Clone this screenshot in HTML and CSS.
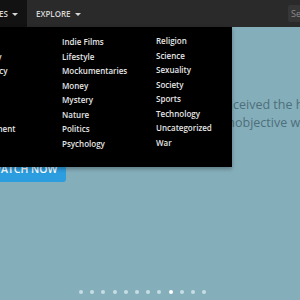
FILE: index.html
```html
<!doctype html>
<html>
<head>
<meta charset="utf-8">
<link rel="stylesheet" href="styles.css">
<title>Explore</title>
</head>
<body>
<header class="navbar">
	<ul class="nav">
		<li class="nav-item active">CATEGORIES <span class="caret"></span></li>
		<li class="nav-item">EXPLORE <span class="caret"></span></li>
	</ul>
	<div class="search">Search</div>
</header>

<div class="dropdown">
	<ul class="col col-first">
		<li>Art</li>
		<li>Astronomy</li>
		<li>Bureaucracy</li>
		<li>Crime</li>
		<li>Drugs</li>
		<li>Ecology</li>
		<li>Entertainment</li>
		<li>Health</li>
	</ul>
	<ul class="col">
		<li>Indie Films</li>
		<li>Lifestyle</li>
		<li>Mockumentaries</li>
		<li>Money</li>
		<li>Mystery</li>
		<li>Nature</li>
		<li>Politics</li>
		<li>Psychology</li>
	</ul>
	<ul class="col col-last">
		<li>Religion</li>
		<li>Science</li>
		<li>Sexuality</li>
		<li>Society</li>
		<li>Sports</li>
		<li>Technology</li>
		<li>Uncategorized</li>
		<li>War</li>
	</ul>
</div>

<div class="hero">
	<div class="hero-text">
		<div class="line"><span class="pre">Watch how mankind con</span>ceived the holy grail</div>
		<div class="line line-2"><span class="pre">in search of an </span>objective way to live</div>
	</div>
	<a class="btn">WATCH NOW</a>
</div>

<div class="dots">
	<span></span><span></span><span></span><span></span>
	<span></span><span></span><span></span><span></span>
	<span class="on"></span><span></span><span></span><span></span>
</div>
</body>
</html>
```
FILE: styles.css
```css
html, body {
	margin: 0;
	height: 100%;
	overflow: hidden;
}
body {
	font-family: "Open Sans", sans-serif;
	background-color: #85aebb;
	position: relative;
}

.navbar {
	height: 27px;
	background-color: #2a2a2a;
	display: flex;
	justify-content: space-between;
}
.nav {
	list-style: none;
	margin: 0 0 0 -49px;
	padding: 0;
	display: flex;
}
.nav-item {
	font-size: 8px;
	font-weight: 600;
	color: #d6d6d6;
	line-height: 27px;
	padding: 0 9px;
	white-space: nowrap;
}
.nav-item.active {
	background-color: #121212;
}
.caret {
	display: inline-block;
	width: 0;
	height: 0;
	margin-left: 2px;
	vertical-align: middle;
	border-top: 3px solid #d6d6d6;
	border-left: 3px solid transparent;
	border-right: 3px solid transparent;
}
.search {
	margin: 5px -40px 0 0;
	height: 17px;
	width: 52px;
	background-color: #363636;
	border-radius: 2px;
	color: #8a8a8a;
	font-size: 9px;
	line-height: 17px;
	padding-left: 3px;
	box-sizing: border-box;
}

.dropdown {
	position: absolute;
	top: 27px;
	left: -56px;
	width: 288px;
	height: 140px;
	box-sizing: border-box;
	background-color: #000;
	padding: 8px 0 0 14px;
	display: grid;
	grid-template-columns: 104px 94px 1fr;
	box-shadow: 0 2px 4px rgba(0,0,0,0.3);
	z-index: 2;
}
.col {
	list-style: none;
	margin: 0;
	padding: 0;
}
.col li {
	font-size: 8px;
	font-weight: 600;
	color: #e6e6e6;
	line-height: 14.5px;
	white-space: nowrap;
}
.col-first {
	margin-left: 1px;
}
.col-last {
	margin-top: -1px;
}

.hero {
	padding-top: 69px;
}
.hero-text {
	color: #4d6f7a;
	font-size: 12.5px;
	line-height: 18px;
	white-space: nowrap;
}
.pre {
	display: inline-block;
	width: 233px;
	text-align: right;
}
.line-2 .pre {
	width: 235px;
}
.btn {
	display: inline-block;
	margin: 20px 0 0 -9px;
	padding: 0 8px 0 0;
	height: 30px;
	line-height: 35px;
	background-color: #2c9ee0;
	border-radius: 3px;
	color: #fff;
	font-size: 10.5px;
	font-weight: 600;
}

.dots {
	position: absolute;
	bottom: 6px;
	left: 79px;
	display: flex;
	gap: 7.2px;
}
.dots span {
	width: 4px;
	height: 4px;
	border-radius: 50%;
	background-color: #c7dde3;
}
.dots span.on {
	background-color: #fff;
}
```
